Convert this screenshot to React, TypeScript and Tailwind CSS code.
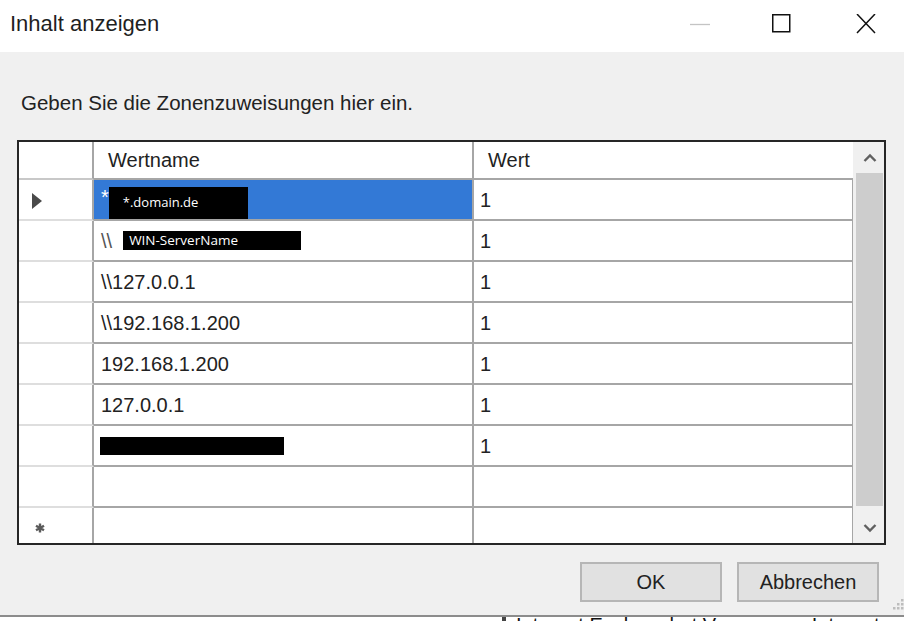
import React from 'react';

type Row = {
  name?: string;
  value?: string;
  kind?: 'selected' | 'server' | 'hidden';
};

const rows: Row[] = [
  { kind: 'selected', value: '1' },
  { kind: 'server', value: '1' },
  { name: '\\\\127.0.0.1', value: '1' },
  { name: '\\\\192.168.1.200', value: '1' },
  { name: '192.168.1.200', value: '1' },
  { name: '127.0.0.1', value: '1' },
  { kind: 'hidden', value: '1' },
  {},
];

const Chevron = ({ down }: { down?: boolean }) => (
  <svg width="14" height="10" viewBox="0 0 14 10">
    <path
      d={down ? 'M1.5 2 L7 7.5 L12.5 2' : 'M1.5 8 L7 2.5 L12.5 8'}
      fill="none"
      stroke="#606060"
      strokeWidth="2.4"
    />
  </svg>
);

function NameCell({ row }: { row: Row }) {
  if (row.kind === 'selected') {
    return (
      <div className="w-[380px] h-full border-r-2 border-b-2 border-r-[#a6a6a6] border-b-[#a6a6a6] bg-[#3379d6] flex pl-[7px]">
        <span className="self-start pt-[5px] text-[20px] leading-[24px] text-white">*</span>
        <div className="self-end w-[139px] h-[32px] bg-black flex items-center pl-[14px] font-['Open_Sans',sans-serif] text-[13px] text-white">
          *.domain.de
        </div>
      </div>
    );
  }
  if (row.kind === 'server') {
    return (
      <div className="w-[380px] h-full border-r-2 border-b-2 border-[#a6a6a6] bg-white flex items-center pl-[7px]">
        <span className="text-[20px] leading-[24px] text-[#555]">\\</span>
        <div className="ml-[11px] w-[178px] h-[19px] bg-black flex items-center pl-[6px] font-['Open_Sans',sans-serif] text-[13.5px] leading-none text-white">
          WIN-ServerName
        </div>
      </div>
    );
  }
  if (row.kind === 'hidden') {
    return (
      <div className="w-[380px] h-full border-r-2 border-b-2 border-[#a6a6a6] bg-white flex items-center pl-[6px]">
        <div className="w-[184px] h-[18px] bg-black" />
      </div>
    );
  }
  return (
    <div className="w-[380px] h-full border-r-2 border-b-2 border-[#a6a6a6] bg-white flex items-center pl-[7px] text-[20px] leading-[24px] text-[#222]">
      {row.name}
    </div>
  );
}

export default function App() {
  return (
    <div className="w-[904px] h-[621px] overflow-hidden bg-white flex flex-col font-['Liberation_Sans',Arial,sans-serif]">
      {/* title bar */}
      <div className="h-[52px] shrink-0 flex items-start bg-white">
        <div className="pt-[11px] pl-[10px] text-[22px] leading-[26px] text-[#1f1f1f]">Inhalt anzeigen</div>
        <div className="ml-auto flex items-start pt-[14px] pr-[28px]">
          <svg width="20" height="20" viewBox="0 0 20 20">
            <line x1="0" y1="10.5" x2="20" y2="10.5" stroke="#c4c4c4" strokeWidth="1.3" />
          </svg>
          <svg className="ml-[61px]" width="20" height="20" viewBox="0 0 20 20">
            <rect x="1.75" y="0.75" width="17" height="17" fill="none" stroke="#111" strokeWidth="1.5" />
          </svg>
          <svg className="ml-[65px]" width="20" height="20" viewBox="0 0 20 20">
            <path d="M1 0 L19 19 M19 0 L1 19" stroke="#111" strokeWidth="1.5" />
          </svg>
        </div>
      </div>

      {/* dialog body */}
      <div className="relative h-[563px] shrink-0 bg-[#f0f0f0] flex flex-col">
        <div className="pt-[39px] pl-[21px] text-[20.5px] leading-[24px] text-[#222]">
          Geben Sie die Zonenzuweisungen hier ein.
        </div>

        <div className="mt-[25px] ml-[17px] w-[869px] border-2 border-[#262626] bg-white flex">
          <div className="flex-1 flex flex-col">
            {/* header */}
            <div className="h-[38px] flex">
              <div className="w-[75px] h-full border-r-2 border-b-2 border-r-[#a6a6a6] border-b-[#c8c8c8]" />
              <div className="w-[380px] h-full border-r-2 border-b-2 border-[#a6a6a6] flex items-center pl-[14px] text-[20px] leading-[24px] text-[#222]">
                Wertname
              </div>
              <div className="flex-1 h-full border-b-2 border-[#a6a6a6] flex items-center pl-[14px] text-[20px] leading-[24px] text-[#222]">
                Wert
              </div>
            </div>

            {rows.map((row, i) => (
              <div key={i} className="h-[41px] flex">
                <div className="w-[75px] h-full border-r-2 border-b-2 border-r-[#a6a6a6] border-b-[#dedede] flex items-center pl-[13px] pt-[2px]">
                  {i === 0 && (
                    <svg width="10" height="16" viewBox="0 0 10 16">
                      <polygon points="0,0 10,8 0,16" fill="#4a4a4a" />
                    </svg>
                  )}
                </div>
                <NameCell row={row} />
                <div className="flex-1 h-full border-r border-b-2 border-[#a6a6a6] flex items-center pl-[6px] text-[20px] leading-[24px] text-[#222]">
                  {row.value}
                </div>
              </div>
            ))}

            {/* new row */}
            <div className="h-[35px] flex">
              <div className="w-[75px] h-full border-r-2 border-[#a6a6a6] flex items-end pl-[16px] pb-[10px]">
                <svg width="10" height="10" viewBox="0 0 10 10">
                  <path d="M5 0.5 V9.5 M1 2.7 L9 7.3 M1 7.3 L9 2.7" stroke="#5a5a5a" strokeWidth="2.4" />
                </svg>
              </div>
              <div className="w-[380px] h-full border-r-2 border-[#a6a6a6]" />
              <div className="flex-1 h-full border-r border-[#a6a6a6]" />
            </div>
          </div>

          {/* scrollbar */}
          <div className="w-[31px] bg-[#f0f0f0] flex flex-col">
            <div className="h-[31px] flex items-center justify-center pl-[2px]">
              <Chevron />
            </div>
            <div className="flex-1 ml-[3px] mr-[1px] bg-[#cdcdcd]" />
            <div className="h-[37px] flex items-center justify-center pl-[2px] pt-[6px]">
              <Chevron down />
            </div>
          </div>
        </div>

        <div className="mt-[17px] flex justify-end gap-[15px] pr-[25px]">
          <button className="w-[142px] h-[40px] bg-[#e1e1e1] border-2 border-[#b6b6b6] text-[20px] leading-[24px] text-[#222]">
            OK
          </button>
          <button className="w-[142px] h-[40px] bg-[#e1e1e1] border-2 border-[#b6b6b6] text-[20px] leading-[24px] text-[#222]">
            Abbrechen
          </button>
        </div>

        {/* size grip */}
        <svg className="absolute right-0 bottom-[3px]" width="14" height="14" viewBox="0 0 14 14">
          {[
            [11, 1],
            [7, 5],
            [11, 5],
            [3, 9],
            [7, 9],
            [11, 9],
          ].map(([x, y], i) => (
            <rect key={i} x={x} y={y} width="2.5" height="2.5" fill="#bdbdbd" />
          ))}
        </svg>
      </div>

      <div className="h-[2px] shrink-0 bg-[#8c8c8c]" />

      {/* window behind the dialog */}
      <div className="bg-white flex items-start pl-[502px]">
        <div className="w-[16px] h-[16px] border-x-2 border-b-2 border-[#444] bg-white" />
        <div className="ml-[10px] text-[20px] leading-[16px] text-[#111] whitespace-nowrap">
          Internet Explorer hat Vorrang vor Intranetzonen
        </div>
      </div>
    </div>
  );
}
